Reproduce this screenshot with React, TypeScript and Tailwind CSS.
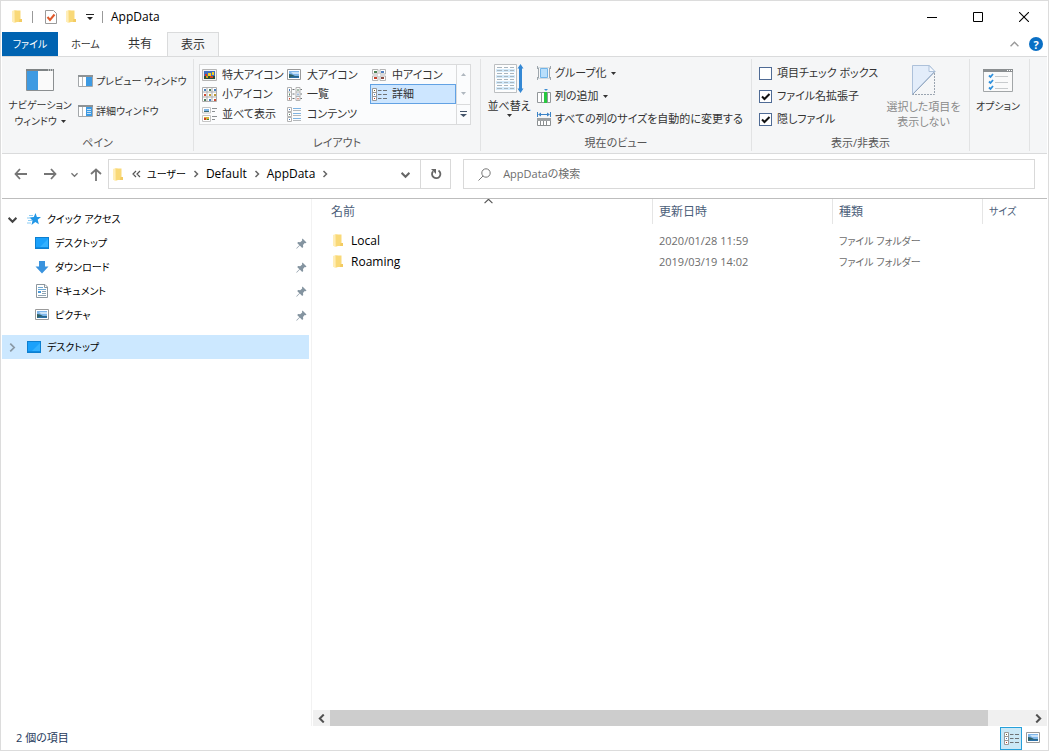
import type { ReactNode } from "react"

type IconProps = { className?: string }

function FolderIcon({ className = "" }: IconProps) {
  return (
    <svg className={`shrink-0 ${className}`} width="11" height="13" viewBox="0 0 11 13">
      <path d="M1 1l4-.8 1 .8v11l-2 1-3-1.500z" fill="#ffe9a6" />
      <path d="M3 .5h6.500V9H11v3H3.500z" fill="#f9d978" />
      <path d="M1 1l2.500-.5V13L1 11.500z" fill="#ffeeb8" />
      <path d="M8.500 9H11v3H8z" fill="#f3cb62" />
    </svg>
  )
}

function DesktopIcon() {
  return (
    <svg className="shrink-0" width="14" height="12" viewBox="0 0 14 12">
      <path d="M0 0h14v12H0z" fill="#0d7fd0" />
      <path d="M1 1h12v9H1z" fill="#1ba1fb" />
      <path d="M13 2v8H5z" fill="#33b1ff" />
      <path d="M1 10h12v1H1z" fill="#0f8ae0" />
    </svg>
  )
}

function StarIcon() {
  return (
    <svg className="shrink-0" width="14" height="14" viewBox="0 0 14 14">
      <path d="M8.500 1l1.400 4H14l-3.300 2.700 1.200 4.600-3.600-2.400L4.500 13l1-4.600L2.500 5.500l4.300-.5z" fill="#2196e6" />
      <path d="M2 3.500h4M0 6h4M1 8.500h4M0 11h4" stroke="#8accf5" strokeWidth="1" />
    </svg>
  )
}

function DownloadIcon() {
  return (
    <svg className="shrink-0" width="14" height="14" viewBox="0 0 14 14">
      <path d="M4 1h6v5.500h3.500L7 13.500 0.500 6.500H4z" fill="#3a93de" />
    </svg>
  )
}

function DocumentIcon() {
  return (
    <svg className="shrink-0" width="14" height="14" viewBox="0 0 14 14">
      <path d="M1.500.5h8.500l2.500 2.500v10.500h-11z" fill="#fff" stroke="#8d979e" />
      <path d="M9.500 0.500V3.500H12.500" fill="none" stroke="#8d979e" />
      <path d="M3 3.500h5M3 5.500h8" stroke="#6ea9d4" />
      <path d="M3 7h3v2H3z" fill="#4a99d8" />
      <path d="M7 7.500h4M7 9.500h4M3 11.500h8" stroke="#8fa5b4" />
    </svg>
  )
}

function PictureIcon() {
  return (
    <svg className="shrink-0" width="14" height="12" viewBox="0 0 14 12">
      <path d="M.5.5h13v10h-13z" fill="#fff" stroke="#9a9a9a" />
      <path d="M2 2h10v7H2z" fill="#7fb6ea" />
      <path d="M4 3h8v2H6z" fill="#c9e2f7" />
      <path d="M2 5l3 .5 3 1.500h4v2H2z" fill="#2f6064" />
      <path d="M5 7.500h7V9H2z" fill="#2b70a8" />
    </svg>
  )
}

function PinIcon() {
  return (
    <svg className="shrink-0" width="11" height="11" viewBox="0 0 11 11">
      <path d="M6.500.5l4 4-1 .7-.8-.2L7 7l.2 2-1 1-2.400-2.400L.7 10.700l-.4-.4 3-3L1.200 5l1-.9 2 .2L6.200 2.500 6 1.400z" fill="#8494a0" />
    </svg>
  )
}

function NavPaneIcon() {
  return (
    <svg width="28" height="22" viewBox="0 0 28 22">
      <path d="M.5.5h27v21H.5z" fill="#fafafa" stroke="#8b8f91" />
      <path d="M0 0h28v2H0z" fill="#7e8385" />
      <path d="M22 1h1M24 1h1M26 1h1" stroke="#fff" />
      <path d="M1 2h11v19H1z" fill="#3e9ae2" />
    </svg>
  )
}

function PaneIcon({ lines = false }: { lines?: boolean }) {
  return (
    <svg className="shrink-0" width="15" height="12" viewBox="0 0 15 12">
      <path d="M.5.5h14v11H.5z" fill="#fff" stroke="#a3a7aa" />
      <path d="M0 0h15v2H0z" fill="#8e9396" />
      <path d="M4.500 2v9" stroke="#b7babc" />
      <path d="M8 2h6v9H8z" fill="#3e9ae2" />
      {lines && <path d="M9 4.500h4M9 6.500h4M9 8.500h4" stroke="#c6e1f7" />}
    </svg>
  )
}

function ExtraLargeIcon() {
  return (
    <svg className="shrink-0" width="15" height="12" viewBox="0 0 15 12">
      <path d="M.5.5h14v11H.5z" fill="#f2f2f2" stroke="#b5b5b5" />
      <path d="M2 2h11v8H2z" fill="#3f6fc0" />
      <path d="M2 7h11v3H2z" fill="#2c4f38" />
      <path d="M3 5h2v2H3z" fill="#d93a1c" />
      <path d="M6 4h3v3H6zM10 3h2v3h-2z" fill="#f5cf22" />
      <path d="M4 7h2v2H4z" fill="#c8a01c" />
      <path d="M8 7h3v2H8z" fill="#d2401f" />
    </svg>
  )
}

function MediumIcon() {
  return (
    <svg className="shrink-0" width="14" height="12" viewBox="0 0 14 12">
      <path d="M.5.5h5.500v4.500H.5zM8 .5h5.500V5H8zM.5 7h5.500v4.500H.5zM8 7h5.500v4.500H8z" fill="#fff" stroke="#b5b5b5" />
      <path d="M2 2h3v2H2z" fill="#4c8256" />
      <path d="M9 2h3v2H9z" fill="#5182c2" />
      <path d="M2 8h3v2H2z" fill="#c5412c" />
      <path d="M9 8h3v2H9z" fill="#8b4c40" />
    </svg>
  )
}

function SmallIcon() {
  return (
    <svg className="shrink-0" width="15" height="15" viewBox="0 0 15 15">
      <path d="M.5.5h14v14H.5zM5 0v15M10 0v15M0 5h15M0 10h15" fill="#fff" stroke="#adadad" />
      <path d="M2 2h2v2H2zM12 2h2v2h-2zM7 12h2v2H7z" fill="#4980c0" />
      <path d="M7 2h2v2H7zM2 12h2v2H2z" fill="#51805f" />
      <path d="M2 7h2v2H2zM12 12h2v2h-2z" fill="#cf4a33" />
      <path d="M7 7h2v2H7zM12 7h2v2h-2z" fill="#c09a36" />
    </svg>
  )
}

function ListIcon() {
  return (
    <svg className="shrink-0" width="15" height="14" viewBox="0 0 15 14">
      <path d="M.5.5h4v13h-4zM.5 5h4M.5 9.500h4M9 .5h4v13H9zM9 5h4M9 9.500h4" fill="#fff" stroke="#b3b3b3" />
      <path d="M5.500 2.500h2M5.500 7h2M5.500 11.500h2M13.500 2.500H15M13.500 7H15M13.500 11.500H15" stroke="#6e7275" />
      <path d="M2 2h1v2H2zM10.500 6.500h1v2h-1z" fill="#4980c0" />
      <path d="M2 6.500h1v2H2zM10.500 2h1v2h-1z" fill="#51805f" />
      <path d="M2 11h1v1.500H2zM10.500 11h1v1.500h-1z" fill="#cf4a33" />
    </svg>
  )
}

function DetailsIcon() {
  return (
    <svg className="shrink-0" width="15" height="13" viewBox="0 0 15 13">
      <path d="M.5.5h4v12h-4zM.5 4.500h4M.5 8.500h4" fill="#fff" stroke="#999" />
      <path d="M6 2.500h3.500M11 2.500h4M6 6.500h3.500M11 6.500h4M6 10.500h3.500M11 10.500h4" stroke="#6e7275" />
      <path d="M2 2h1v1H2z" fill="#7a6a30" />
      <path d="M2 6h1v1H2z" fill="#4980c0" />
      <path d="M2 10h1v1H2z" fill="#c43a22" />
    </svg>
  )
}

function TilesIcon() {
  return (
    <svg className="shrink-0" width="15" height="15" viewBox="0 0 15 15">
      <path d="M.5.5h8v5.500h-8zM.5 8.500h8v6h-8z" fill="#fff" stroke="#c4c4c4" />
      <path d="M2 2h5v3H2z" fill="#7fb6e6" />
      <path d="M2 4h5v1H2z" fill="#3f6e75" />
      <path d="M2 10h5v3H2z" fill="#d8b23d" />
      <path d="M2 11h2v2H2z" fill="#c9402a" />
      <path d="M5 12h2v1H5z" fill="#3d8540" />
      <path d="M10 1.500h5M10 4.500h3M10 9.500h5M10 12.500h3" stroke="#8b8f92" />
    </svg>
  )
}

function ContentIcon() {
  return (
    <svg className="shrink-0" width="14" height="15" viewBox="0 0 14 15">
      <path d="M.5.5h4v4h-4zM.5 5.500h4v4h-4zM.5 10.500h4v4h-4z" fill="#fff" stroke="#b3b3b3" />
      <path d="M6 1.500h8M6 6.500h8M6 11.500h8" stroke="#7eb3e2" />
      <path d="M6 3.500h8M6 8.500h8M6 13.500h8" stroke="#b4b8bb" />
      <path d="M2 2h1v1H2zM2 12h1v1H2z" fill="#4980c0" />
      <path d="M2 7h1v1H2z" fill="#51805f" />
    </svg>
  )
}

function SortIcon() {
  return (
    <svg width="30" height="30" viewBox="0 0 30 30">
      <path d="M.5.5h22v28H.5z" fill="#fdfdfd" stroke="#bcbfc1" />
      <path d="M2 5h19v3H2zM2 11h19v3H2zM2 17h19v3H2zM2 23h19v3H2z" fill="#d3eafa" />
      <path
        d="M3 3.500h5M10 3.500h4M16 3.500h4M3 6.500h5M10 6.500h4M16 6.500h4M3 9.500h5M10 9.500h4M16 9.500h4M3 12.500h5M10 12.500h4M16 12.500h4M3 15.500h5M10 15.500h4M16 15.500h4M3 18.500h5M10 18.500h4M16 18.500h4M3 21.500h5M10 21.500h4M16 21.500h4M3 24.500h5M10 24.500h4M16 24.500h4"
        stroke="#a9b6bf"
      />
      <path d="M26.500 0l3 4.500H28v20h1.500l-3 4.500-3-4.500H25v-20h-1.500z" fill="#3488d4" />
    </svg>
  )
}

function GroupIcon() {
  return (
    <svg className="shrink-0" width="14" height="14" viewBox="0 0 14 14">
      <path d="M.5 0v3M.5 11v3M13.500 0v3M13.500 11v3M1.500 1v12M12.500 1v12" stroke="#9fa7ad" />
      <path d="M1 1.500h12M1 12.500h12" stroke="#d3dade" />
      <path d="M3.500 2.500h7v9h-7z" fill="#b9dffb" stroke="#71b4e8" />
    </svg>
  )
}

function AddColumnIcon() {
  return (
    <svg className="shrink-0" width="14" height="14" viewBox="0 0 14 14">
      <path d="M.5 3.500h13v10H.5zM4.500 3.500v10M10.500 3.500v10" fill="#fff" stroke="#92979a" />
      <path d="M7 3h3v11H7z" fill="#28c840" />
      <path d="M7 0h4L9 2z" fill="#3f8ed3" />
    </svg>
  )
}

function FitColumnsIcon() {
  return (
    <svg className="shrink-0" width="14" height="14" viewBox="0 0 14 14">
      <path d="M.5 0v5M13.500 0v5M2 2.500h10" stroke="#3b83c7" />
      <path d="M1 2.500l3-2v4zM13 2.500l-3-2v4z" fill="#3b83c7" />
      <path d="M.5 6.500h13v7H.5zM3.500 9v5M6.500 9v5M9.500 9v5" fill="#fff" stroke="#8b8f91" />
      <path d="M0 6h14v3H0z" fill="#9da1a3" />
    </svg>
  )
}

function HideItemsIcon() {
  return (
    <svg width="24" height="30" viewBox="0 0 24 30">
      <path d="M.5 29.500V.5h17l5 6z" fill="#e3edfa" stroke="#adc1da" />
      <path d="M17 .5v6h6z" fill="#f5f9fe" stroke="#adc1da" />
      <path d="M.5 29.500L23 6.500" stroke="#8fa4bd" />
      <path d="M22.500 8v21.500H.5" fill="none" stroke="#9aa4b0" strokeDasharray="2 1" />
    </svg>
  )
}

function OptionsIcon() {
  return (
    <svg width="30" height="23" viewBox="0 0 30 23">
      <path d="M.5.5h29v22H.5z" fill="#fafafa" stroke="#a2a6a8" />
      <path d="M0 0h30v3H0z" fill="#8b8f91" />
      <path d="M24 1.500h1M26 1.500h1M28 1.500h1" stroke="#fff" />
      <path d="M6 6.500l1.500 1.500 2.500-3M6 12.500l1.500 1.500 2.500-3M6 18.500l1.500 1.500 2.500-3" fill="none" stroke="#2f90dc" strokeWidth="1.800" />
      <path d="M12 7.500h13M12 13.500h13M12 19.500h13" stroke="#c8cbcd" />
    </svg>
  )
}

function Caret({ className = "" }: IconProps) {
  return (
    <svg className={`shrink-0 ${className}`} width="5" height="3" viewBox="0 0 5 3">
      <path d="M0 0h5L2.500 3z" fill="currentColor" />
    </svg>
  )
}

function Chevron({ d, size = 8, width = 1.5 }: { d: string; size?: number; width?: number }) {
  return (
    <svg className="shrink-0" width={size} height={size} viewBox="0 0 8 8">
      <path d={d} fill="none" stroke="currentColor" strokeWidth={width} />
    </svg>
  )
}

const DOWN = "M.5 2.500L4 6l3.500-3.500"
const UP = "M.5 5.500L4 2l3.500 3.500"
const RIGHT = "M2.500 1L5.500 4l-3 3"
const RIGHT_WIDE = "M2 .5L5.500 4 2 7.500"
const LEFT_WIDE = "M6 .5L2.500 4 6 7.500"

const layouts = [
  { name: "特大アイコン", icon: <ExtraLargeIcon /> },
  { name: "大アイコン", icon: <PictureIcon /> },
  { name: "中アイコン", icon: <MediumIcon /> },
  { name: "小アイコン", icon: <SmallIcon /> },
  { name: "一覧", icon: <ListIcon /> },
  { name: "詳細", icon: <DetailsIcon />, active: true },
  { name: "並べて表示", icon: <TilesIcon /> },
  { name: "コンテンツ", icon: <ContentIcon /> },
]

const checks = [
  { id: "item-checks", label: "項目チェック ボックス", on: false },
  { id: "extensions", label: "ファイル名拡張子", on: true },
  { id: "hidden-files", label: "隠しファイル", on: true },
]

const quickAccess = [
  { name: "デスクトップ", icon: <DesktopIcon /> },
  { name: "ダウンロード", icon: <DownloadIcon /> },
  { name: "ドキュメント", icon: <DocumentIcon /> },
  { name: "ピクチャ", icon: <PictureIcon /> },
]

const files = [
  { name: "Local", date: "2020/01/28 11:59", type: "ファイル フォルダー" },
  { name: "Roaming", date: "2019/03/19 14:02", type: "ファイル フォルダー" },
]

function Group({ title, className, children }: { title: string; className: string; children: ReactNode }) {
  return (
    <section className={`my-0.5 flex shrink-0 flex-col border-r border-[#e2e3e4] ${className}`}>
      <div className="flex flex-1">{children}</div>
      <h2 className="h-4 text-center text-[#555]">{title}</h2>
    </section>
  )
}

function TitleBar() {
  return (
    <header className="flex h-[31px] items-center pl-[9px]">
      <FolderIcon />
      <span className="ml-2.5 h-3 w-px bg-[#999]" />
      <button aria-label="プロパティ" className="ml-3">
        <svg width="12" height="14" viewBox="0 0 12 14">
          <path d="M.5.5h8l3 3v10H.5z" fill="#fff" stroke="#9a9a9a" />
          <path d="M2.500 7l2.500 3 4.500-5.500" fill="none" stroke="#e0592a" strokeWidth="2" />
        </svg>
      </button>
      <button aria-label="新しいフォルダー" className="ml-2">
        <FolderIcon />
      </button>
      <button aria-label="クイック アクセス ツール バーのカスタマイズ" className="ml-2.5">
        <svg width="8" height="6" viewBox="0 0 8 6">
          <path d="M0 0h8v1H0zM1 3h6L4 6z" fill="#222" />
        </svg>
      </button>
      <span className="ml-2 h-3 w-px bg-[#999]" />
      <h1 className="ml-2 text-[12px] text-black">AppData</h1>
      <div className="ml-auto flex">
        <button aria-label="最小化" className="grid h-[30px] w-[46px] place-items-center">
          <svg width="10" height="10" viewBox="0 0 10 10">
            <path d="M0 5.500h10" stroke="#000" />
          </svg>
        </button>
        <button aria-label="最大化" className="grid h-[30px] w-[46px] place-items-center">
          <svg width="10" height="10" viewBox="0 0 10 10">
            <path d="M.5.5h9v9h-9z" fill="none" stroke="#000" />
          </svg>
        </button>
        <button aria-label="閉じる" className="grid h-[30px] w-[46px] place-items-center">
          <svg width="10" height="10" viewBox="0 0 10 10">
            <path d="M0 0l10 10M10 0L0 10" stroke="#000" strokeWidth="1.1" />
          </svg>
        </button>
      </div>
    </header>
  )
}

function Tabs() {
  return (
    <nav className="flex h-6 text-[#333]">
      <button className="w-14 bg-[#0063b1] text-[10px] text-white">ファイル</button>
      <button className="w-[55px] text-[10px]">ホーム</button>
      <button className="w-[54px] text-[12px]">共有</button>
      <button className="-mb-px w-[52px] border border-b-0 border-[#dadbdc] bg-[#f5f6f7] pb-px text-[12px]">表示</button>
      <div className="ml-auto flex items-center gap-2.5 pr-1">
        <button aria-label="リボンの最小化" className="text-[#999]">
          <Chevron d={UP} size={9} width={1.2} />
        </button>
        <button aria-label="ヘルプ" className="grid size-3.5 place-items-center rounded-full bg-[#0a6fc4] text-[11px] leading-none font-bold text-white">
          ?
        </button>
      </div>
    </nav>
  )
}

function Ribbon() {
  return (
    <div className="flex h-[98px] overflow-hidden border-y border-[#dadbdc] bg-[#f5f6f7] text-[#333]">
      <Group title="ペイン" className="w-48">
        <button className="flex w-[76px] shrink-0 flex-col items-center pt-2.5 text-[10px]">
          <NavPaneIcon />
          <span className="mt-1.5 whitespace-nowrap">ナビゲーション</span>
          <span className="flex items-center gap-1 whitespace-nowrap">
            ウィンドウ
            <Caret />
          </span>
        </button>
        <div className="flex flex-col gap-3.5 pt-3.5 text-[10px]">
          <button className="flex items-center gap-[3px] whitespace-nowrap">
            <PaneIcon />
            プレビュー ウィンドウ
          </button>
          <button className="flex items-center gap-[3px] whitespace-nowrap">
            <PaneIcon lines />
            詳細ウィンドウ
          </button>
        </div>
      </Group>

      <Group title="レイアウト" className="w-[287px]">
        <div className="mt-[5px] ml-[5px] flex h-[61px] border border-[#dadbdc] bg-[#fbfcfd]">
          <div className="grid grid-cols-[85px_85px_86px] grid-rows-[19px_20px_20px]">
            {layouts.map((l) => (
              <button
                key={l.name}
                className={`flex items-center gap-1 border pl-px whitespace-nowrap ${
                  l.active ? "border-[#62a2e4] bg-[#cde6ff]" : "border-transparent"
                }`}
              >
                <span className="flex w-4">{l.icon}</span>
                {l.name}
              </button>
            ))}
          </div>
          <div className="flex w-3.5 flex-col border-l border-[#dadbdc]">
            <button aria-label="上へ" className="grid flex-1 place-items-center text-[#b0b8bf]">
              <Caret className="rotate-180" />
            </button>
            <button aria-label="下へ" className="grid flex-1 place-items-center text-[#b0b8bf]">
              <Caret />
            </button>
            <button aria-label="その他" className="grid flex-1 place-items-center border-t border-[#dadbdc]">
              <svg width="7" height="6" viewBox="0 0 7 6">
                <path d="M0 0h7v1H0zM0 3h7L3.500 6z" fill="#44546a" />
              </svg>
            </button>
          </div>
        </div>
      </Group>

      <Group title="現在のビュー" className="w-[271px]">
        <button className="flex w-14 shrink-0 flex-col items-center pt-[5px]">
          <SortIcon />
          <span className="mt-1 whitespace-nowrap">並べ替え</span>
          <Caret />
        </button>
        <div className="flex flex-col gap-[7px] pt-1.5">
          <button className="flex items-center gap-1 whitespace-nowrap">
            <GroupIcon />
            グループ化
            <Caret />
          </button>
          <button className="flex items-center gap-1 whitespace-nowrap">
            <AddColumnIcon />
            列の追加
            <Caret />
          </button>
          <button className="flex items-center gap-1 whitespace-nowrap">
            <FitColumnsIcon />
            すべての列のサイズを自動的に変更する
          </button>
        </div>
      </Group>

      <Group title="表示/非表示" className="w-[218px]">
        <div className="flex w-[126px] shrink-0 flex-col gap-[7px] pt-1.5 pl-[7px]">
          {checks.map((c) => (
            <div key={c.id} className="flex items-center gap-[5px]">
              <span className="grid">
                <input
                  id={c.id}
                  type="checkbox"
                  defaultChecked={c.on}
                  className="peer col-start-1 row-start-1 size-[13px] appearance-none border border-[#4f6b95] bg-white"
                />
                <svg
                  className="pointer-events-none invisible col-start-1 row-start-1 size-[13px] peer-checked:visible"
                  viewBox="0 0 13 13"
                >
                  <path d="M3 6.500l2.500 2.500 5-5" fill="none" stroke="#111" strokeWidth="2" />
                </svg>
              </span>
              <label htmlFor={c.id} className="whitespace-nowrap">
                {c.label}
              </label>
            </div>
          ))}
        </div>
        <button disabled className="flex flex-1 flex-col items-center pt-1.5 text-[#8a8a8a]">
          <HideItemsIcon />
          <span className="mt-1 whitespace-nowrap leading-[15px]">選択した項目を</span>
          <span className="whitespace-nowrap leading-[15px]">表示しない</span>
        </button>
      </Group>

      <div className="my-0.5 w-[60px] shrink-0 border-r border-[#e2e3e4]">
        <button className="flex w-14 flex-col items-center pt-2.5 text-[10px]">
          <OptionsIcon />
          <span className="mt-1.5 whitespace-nowrap">オプション</span>
        </button>
      </div>
    </div>
  )
}

function AddressBar() {
  return (
    <div className="flex h-11 items-center px-3 pb-1">
      <div className="flex w-[94px] shrink-0 items-center text-[#757575]">
        <button aria-label="戻る">
          <svg width="13" height="12" viewBox="0 0 13 12">
            <path d="M6 1L1.500 6 6 11M1.500 6H13" fill="none" stroke="currentColor" strokeWidth="1.800" />
          </svg>
        </button>
        <button aria-label="進む" className="ml-[17px]">
          <svg width="13" height="12" viewBox="0 0 13 12">
            <path d="M7 1l4.500 5L7 11M11.500 6H0" fill="none" stroke="currentColor" strokeWidth="1.800" />
          </svg>
        </button>
        <button aria-label="最近表示した場所" className="ml-3.5">
          <Chevron d={DOWN} size={7} />
        </button>
        <button aria-label="上へ" className="ml-3">
          <svg width="12" height="13" viewBox="0 0 12 13">
            <path d="M1 6l5-4.500L11 6M6 1.500V13" fill="none" stroke="currentColor" strokeWidth="1.800" />
          </svg>
        </button>
      </div>
      <div className="grid min-w-0 flex-1 grid-cols-[3fr_5fr] gap-3">
        <div className="flex h-[30px] min-w-0 items-center border border-[#d9d9d9] pl-[3px] text-[12px] text-black">
          <FolderIcon />
          <span className="ml-[9px] flex text-[#555]">
            <svg width="9" height="8" viewBox="0 0 9 8">
              <path d="M4 1L1 4l3 3M8 1L5 4l3 3" fill="none" stroke="currentColor" strokeWidth="1.200" />
            </svg>
          </span>
          <a href="#users" className="ml-1.5 text-[10px] whitespace-nowrap">ユーザー</a>
          <span className="mx-1.5 text-[#666]">
            <Chevron d={RIGHT} />
          </span>
          <a href="#default">Default</a>
          <span className="mx-1.5 text-[#666]">
            <Chevron d={RIGHT} />
          </span>
          <a href="#appdata">AppData</a>
          <span className="ml-1.5 text-[#666]">
            <Chevron d={RIGHT} />
          </span>
          <button aria-label="以前の場所" className="ml-auto pr-2.5 text-[#666]">
            <Chevron d={DOWN} size={9} width={1.8} />
          </button>
          <button aria-label="最新の情報に更新" className="grid h-full w-[30px] place-items-center border-l border-[#d9d9d9] text-[#666]">
            <svg width="12" height="12" viewBox="0 0 12 12">
              <path d="M8.500 2.500a4.200 4.200 0 1 1-5.500.8" fill="none" stroke="currentColor" strokeWidth="1.800" />
              <path d="M1 1h5v5z" fill="currentColor" />
            </svg>
          </button>
        </div>
        <div className="flex h-[30px] min-w-0 items-center gap-3 border border-[#d9d9d9] pl-3.5">
          <svg className="shrink-0" width="13" height="13" viewBox="0 0 13 13">
            <circle cx="8" cy="5" r="4.200" fill="none" stroke="#777" />
            <path d="M5 8L.5 12.500" stroke="#777" />
          </svg>
          <input
            type="search"
            aria-label="AppDataの検索"
            placeholder="AppDataの検索"
            className="min-w-0 flex-1 text-[11px] outline-none placeholder:text-[#6d6d6d]"
          />
        </div>
      </div>
    </div>
  )
}

function Sidebar() {
  return (
    <aside className="w-[310px] shrink-0 border-r border-[#f2f2f2] pt-2 pr-0.5 text-[10px] text-black">
      <a href="#quick" className="flex h-6 items-center pl-1.5">
        <span className="text-[#444]">
          <Chevron d={DOWN} size={9} width={1.8} />
        </span>
        <span className="ml-2.5 flex items-center gap-1.5">
          <StarIcon />
          クイック アクセス
        </span>
      </a>
      {quickAccess.map((q) => (
        <a key={q.name} href={`#${q.name}`} className="flex h-6 items-center gap-1.5 pr-0.5 pl-[33px]">
          {q.icon}
          <span className="flex-1">{q.name}</span>
          <PinIcon />
        </a>
      ))}
      <a href="#desktop" className="mt-2 flex h-6 items-center bg-[#cce8ff] pl-1.5">
        <span className="text-[#8a99a5]">
          <Chevron d={RIGHT_WIDE} size={9} />
        </span>
        <span className="ml-2.5 flex items-center gap-1.5">
          <DesktopIcon />
          デスクトップ
        </span>
      </a>
    </aside>
  )
}

function FileList() {
  return (
    <main className="flex min-w-0 flex-1 flex-col pl-px">
      <div className="flex-1 overflow-hidden">
        <table className="w-full table-fixed text-left">
          <thead className="text-[12px] text-[#4c607a]">
            <tr>
              <th className="relative w-[340px] pb-1.5 font-normal">
                <div className="h-[25px] border-r border-[#e5e5e5] pl-[18px] leading-[25px]">名前</div>
                <span className="absolute -top-0.5 left-[171px] text-[#555]">
                  <Chevron d={UP} size={9} width={1} />
                </span>
              </th>
              <th className="w-[180px] pb-1.5 font-normal">
                <div className="h-[25px] border-r border-[#e5e5e5] pl-1.5 leading-[25px]">更新日時</div>
              </th>
              <th className="w-[150px] pb-1.5 font-normal">
                <div className="h-[25px] border-r border-[#e5e5e5] pl-1.5 leading-[25px]">種類</div>
              </th>
              <th className="pb-1.5 font-normal">
                <div className="h-[25px] pl-1.5 text-[10px] leading-[25px]">サイズ</div>
              </th>
            </tr>
          </thead>
          <tbody className="text-[#6d6d6d]">
            {files.map((f) => (
              <tr key={f.name} className="h-[21px]">
                <td className="pl-[19px] text-[12px] text-black">
                  <span className="flex items-center gap-2">
                    <FolderIcon />
                    {f.name}
                  </span>
                </td>
                <td className="pl-1.5">{f.date}</td>
                <td className="pl-1.5 text-[10px]">{f.type}</td>
                <td />
              </tr>
            ))}
          </tbody>
        </table>
      </div>
      <div className="flex h-4 items-center bg-[#f0f0f0] text-[#505050]">
        <button aria-label="左へスクロール" className="grid w-[17px] place-items-center">
          <Chevron d={LEFT_WIDE} size={9} width={1.8} />
        </button>
        <div className="h-full flex-1">
          <div className="h-full w-[94%] bg-[#cdcdcd]" />
        </div>
        <button aria-label="右へスクロール" className="grid w-[17px] place-items-center">
          <Chevron d={RIGHT_WIDE} size={9} width={1.8} />
        </button>
      </div>
    </main>
  )
}

export default function App() {
  return (
    <div className="flex min-h-screen flex-col border border-[#dcdcdc] bg-white px-px font-['Open_Sans','Noto_Sans_CJK_JP',sans-serif] text-[11px] leading-4 [font-feature-settings:'palt']">
      <TitleBar />
      <Tabs />
      <Ribbon />
      <AddressBar />
      <div className="flex flex-1 border-t border-[#bdbdbd]">
        <Sidebar />
        <FileList />
      </div>
      <footer className="flex h-6 items-center pr-1.5 pl-3.5 text-[#1e395b]">
        <span>2 個の項目</span>
        <div className="ml-auto flex items-center gap-[3px]">
          <button aria-label="詳細表示" className="grid h-[23px] w-[22px] place-items-center border border-[#26a0da] bg-[#cbe8f6]">
            <DetailsIcon />
          </button>
          <button aria-label="大アイコン表示" className="grid w-4 place-items-center">
            <PictureIcon />
          </button>
        </div>
      </footer>
    </div>
  )
}
